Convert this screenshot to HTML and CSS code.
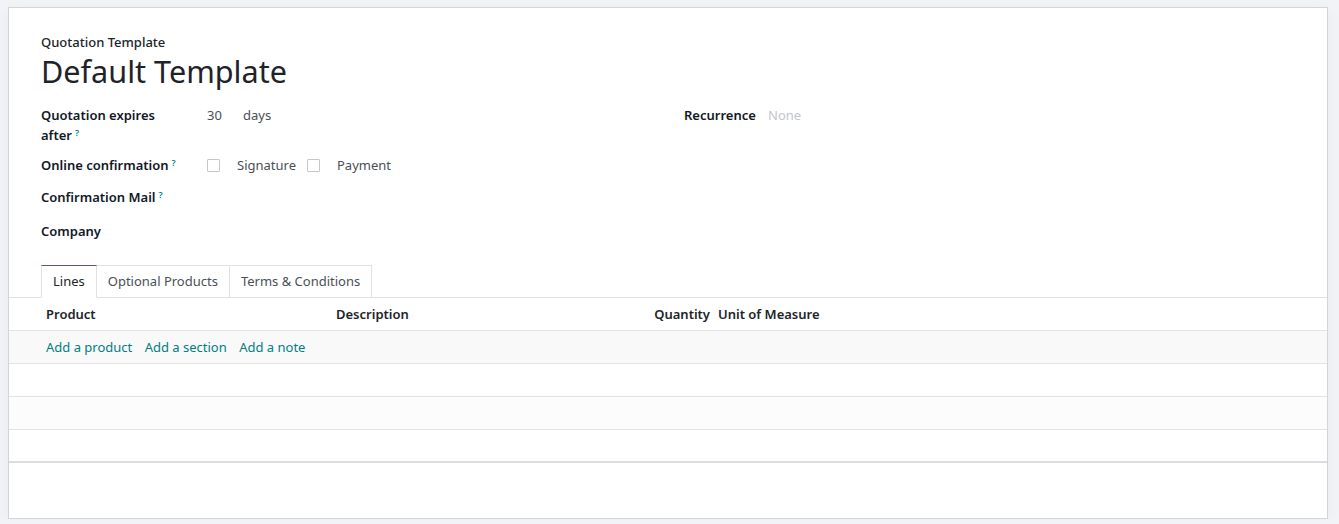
FILE: index.html
```html
<!DOCTYPE html>
<html lang="en">

<head>
    <meta charset="UTF-8">
    <meta name="viewport" content="width=device-width, initial-scale=1.0">
    <title>Default Template</title>
    <link rel="stylesheet" href="styles.css">
</head>

<body>
    <div class="sheet">
        <div class="title_block">
            <div class="title_label">Quotation Template</div>
            <h1 class="title_name">Default Template</h1>
        </div>

        <div class="groups">
            <div class="group">
                <div class="row row_expires">
                    <div class="label">Quotation expires after<sup>?</sup></div>
                    <div class="value">
                        <span class="number">30</span>
                        <span>days</span>
                    </div>
                </div>
                <div class="row row_online">
                    <div class="label">Online confirmation<sup>?</sup></div>
                    <div class="value">
                        <span class="check"></span>
                        <span class="check_text">Signature</span>
                        <span class="check"></span>
                        <span class="check_text">Payment</span>
                    </div>
                </div>
                <div class="row row_mail">
                    <div class="label">Confirmation Mail<sup>?</sup></div>
                    <div class="value"></div>
                </div>
                <div class="row">
                    <div class="label">Company</div>
                    <div class="value"></div>
                </div>
            </div>
            <div class="group group_right">
                <div class="row">
                    <div class="label label_short">Recurrence</div>
                    <div class="value placeholder">None</div>
                </div>
            </div>
        </div>

        <div class="notebook">
            <ul class="tabs">
                <li class="active">Lines</li>
                <li>Optional Products</li>
                <li>Terms &amp; Conditions</li>
            </ul>
            <table class="lines">
                <colgroup>
                    <col class="col_product">
                    <col class="col_desc">
                    <col class="col_qty">
                    <col>
                </colgroup>
                <thead>
                    <tr>
                        <th class="first">Product</th>
                        <th>Description</th>
                        <th class="num">Quantity</th>
                        <th>Unit of Measure</th>
                    </tr>
                </thead>
                <tbody>
                    <tr class="add_row">
                        <td class="first" colspan="4">
                            <a href="#">Add a product</a>
                            <a href="#">Add a section</a>
                            <a href="#">Add a note</a>
                        </td>
                    </tr>
                    <tr><td colspan="4"></td></tr>
                    <tr class="shade"><td colspan="4"></td></tr>
                    <tr><td colspan="4"></td></tr>
                </tbody>
            </table>
        </div>
    </div>
</body>

</html>
```

FILE: styles.css
```css
* {
    margin: 0;
    padding: 0;
    box-sizing: border-box;
}

li {
    list-style: none;
}

body {
    background: #f2f3f7;
    font-family: "Noto Sans", "Open Sans", sans-serif;
    font-size: 13px;
    line-height: 20px;
    color: #212529;
}

.sheet {
    width: 1320px;
    height: 512px;
    margin: 7px 0 0 8px;
    padding: 24px 32px 0;
    background: white;
    border: 1px solid #d3d5d9;
    box-shadow: 0 4px 16px rgba(0, 0, 0, 0.04);
}

.title_label {
    font-weight: 500;
    color: #212529;
}

.title_name {
    font-size: 30.6px;
    line-height: 36px;
    font-weight: 400;
    margin-top: 1px;
    color: #1f2328;
}

.groups {
    display: flex;
    margin-top: 16px;
}

.group {
    width: 643px;
}

.group_right {
    flex: 1;
}

.row {
    display: flex;
    min-height: 20px;
}

.row_expires {
    height: 50px;
}

.row_online {
    height: 32px;
}

.row_mail {
    height: 34px;
}

.label {
    width: 166px;
    padding-right: 30px;
    font-weight: 600;
    color: #111827;
}

.label_short {
    width: 84px;
    padding-right: 0;
}

.label sup {
    display: inline-block;
    font-size: 9px;
    line-height: 9px;
    color: #017e84;
    margin-left: 3px;
    vertical-align: 4px;
}

.value {
    display: flex;
    align-items: center;
    height: 20px;
    color: #495057;
}

.number {
    width: 36px;
}

.placeholder {
    color: #c3c6cc;
}

.check {
    width: 13px;
    height: 13px;
    border: 1px solid #c5c7cb;
    border-radius: 1px;
}

.check_text {
    margin: 0 11px 0 17px;
}

.notebook {
    margin: 24px -32px 0;
}

.tabs {
    display: flex;
    padding-left: 32px;
    border-bottom: 1px solid #dee2e6;
}

.tabs li {
    height: 33px;
    line-height: 31px;
    padding: 0 11px;
    margin-bottom: -1px;
    border: 1px solid #dee2e6;
    border-left: none;
    color: #495057;
    cursor: pointer;
}

.tabs li.active {
    border-left: 1px solid #dee2e6;
    border-top-color: #714b67;
    border-bottom-color: white;
    background: white;
    color: #212529;
}

.lines {
    width: 100%;
    border-collapse: collapse;
    table-layout: fixed;
}

.col_product {
    width: 323px;
}

.col_desc {
    width: 318px;
}

.col_qty {
    width: 64px;
}

.lines th,
.lines td {
    height: 33px;
    padding: 0 4px;
    text-align: left;
    border-bottom: 1px solid #e2e3e5;
}

.lines th {
    height: 32px;
    font-weight: 600;
    color: #212529;
    background: white;
}

.lines th.num {
    text-align: right;
}

.lines .first {
    padding-left: 37px;
}

.lines tbody tr:last-child td {
    border-bottom: 2px solid #dcdde0;
}

.add_row td {
    background: #f9f9f9;
}

.shade td {
    background: #fcfcfc;
}

.add_row a {
    color: #017e84;
    text-decoration: none;
    margin-right: 9px;
}
```
